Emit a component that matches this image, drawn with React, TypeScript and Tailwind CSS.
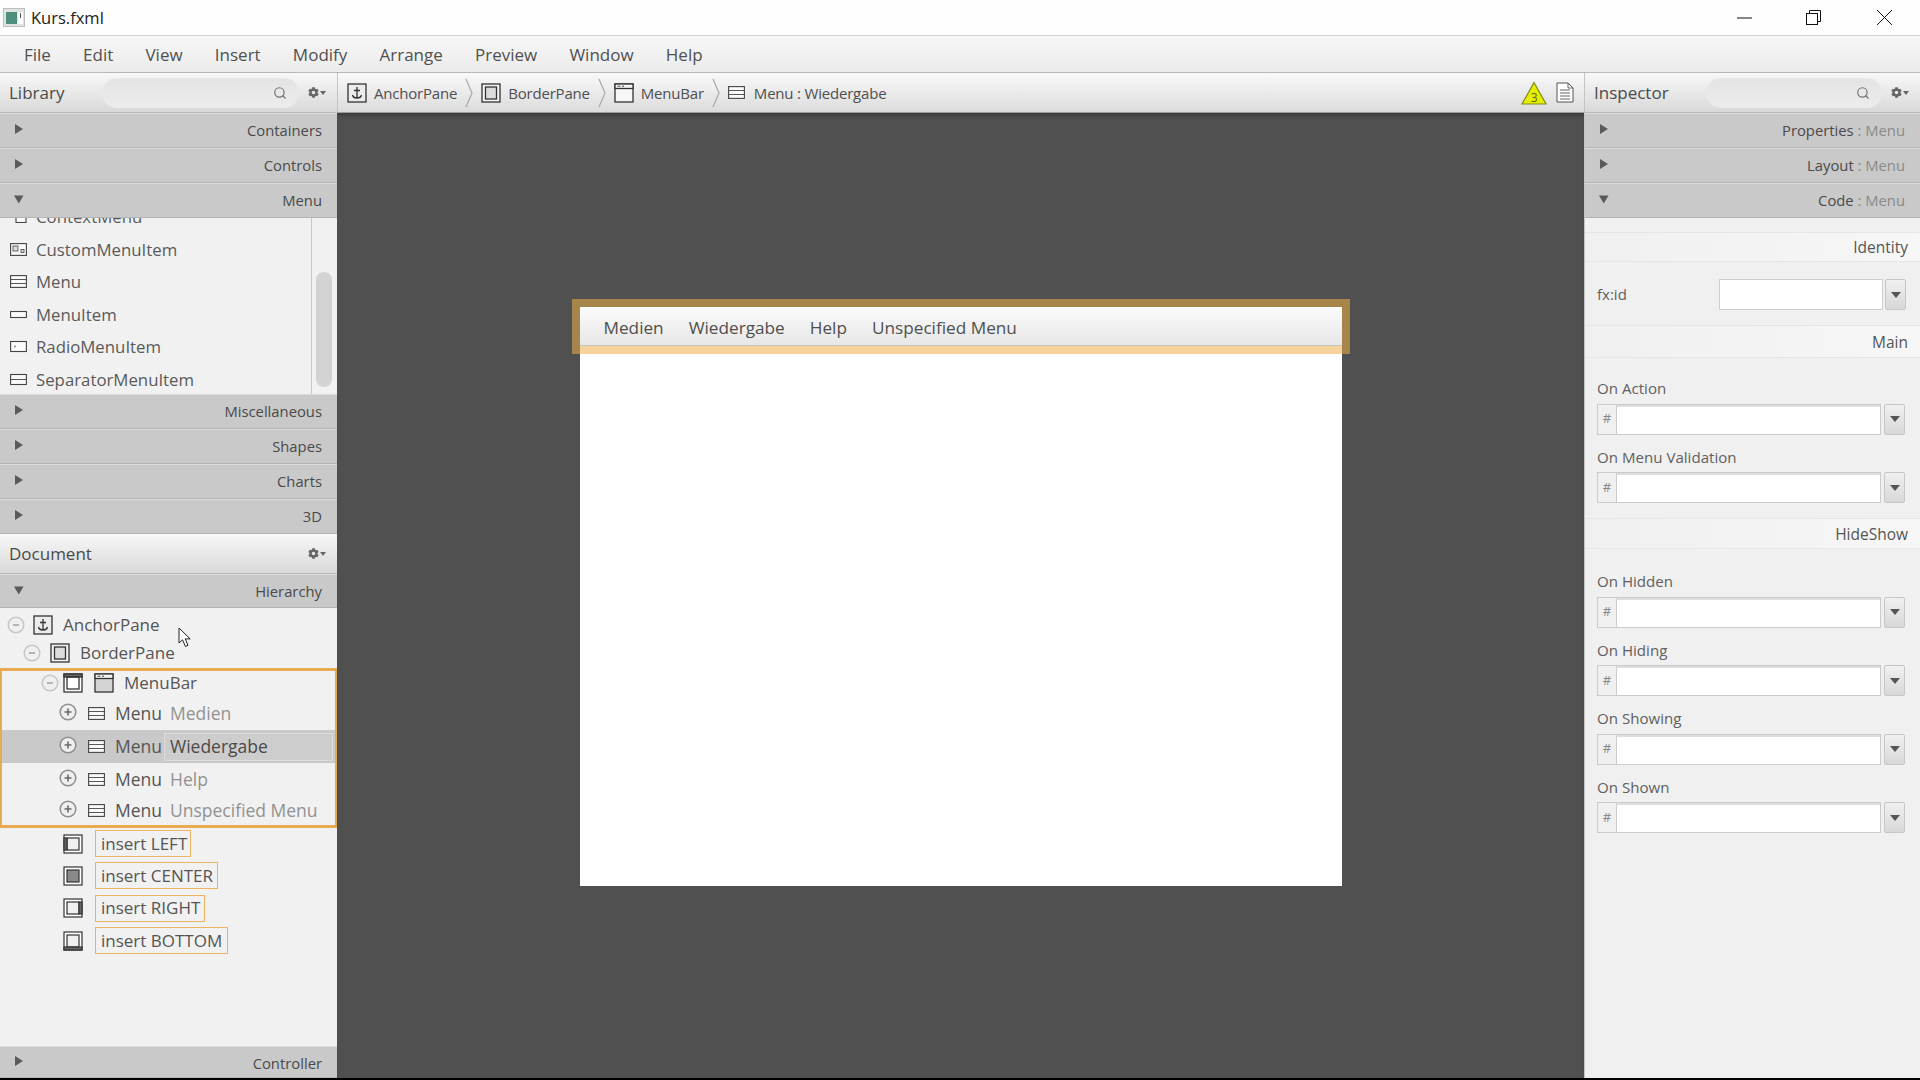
import { FaCog } from 'react-icons/fa'
import { Search } from 'lucide-react'
import type { ReactNode } from 'react'

const Arrow = ({ open }: { open?: boolean }) => (
  <svg width="10" height="10" viewBox="0 0 10 10" className="mb-[3px] shrink-0">
    <path d={open ? 'M0 1.5h9.5L4.8 9.5z' : 'M1 0l8 5-8 5z'} fill="#5a5a5a" />
  </svg>
)

const Bar = ({ open, h = 'h-[35px]', children }: { open?: boolean; h?: string; children: ReactNode }) => (
  <div
    className={`${h} shrink-0 flex items-center justify-between pl-[14px] pr-[15px] bg-[#c9c9c9] border-t border-t-[#dcdcdc] border-b border-b-[#b4b4b4] text-[14.8px] text-[#4a4a4a]`}
  >
    <Arrow open={open} />
    <span>{children}</span>
  </div>
)

const Gear = () => (
  <div className="flex items-center gap-[1px] text-[#666]">
    <FaCog size={11} />
    <svg width="6" height="4" viewBox="0 0 6 4">
      <path d="M0 0h6L3 4z" fill="#666" />
    </svg>
  </div>
)

const PanelHeader = ({ title, searchWidth }: { title: string; searchWidth?: string }) => (
  <div className="h-[40px] shrink-0 flex items-center pl-[9px] pr-[11px] bg-linear-to-b from-[#f8f8f8] to-[#d9d9d9] border-b border-b-[#b8b8b8] text-[17px] text-[#4a4a4a]">
    <span>{title}</span>
    <div className="flex-1" />
    {searchWidth && (
      <div
        className={`${searchWidth} h-[30px] mr-[9px] rounded-[14px] border border-[#e9e9e9] bg-linear-to-b from-[#e4e4e4] to-[#ececec] flex items-center justify-end pr-[11px] text-[#707070]`}
      >
        <Search size={14} strokeWidth={2} />
      </div>
    )}
    <Gear />
  </div>
)

/* little outline glyphs used in the library, tree and breadcrumb */
const AnchorIcon = () => (
  <svg width="20" height="20" viewBox="0 0 20 20" className="shrink-0" fill="none" stroke="#333" strokeWidth="1.3">
    <rect x="1" y="1" width="18" height="18" fill="#ececec" />
    <path d="M10 4v11M7 7.5h6M5.5 12c.5 2.5 2.5 3 4.5 3s4-.5 4.5-3" />
  </svg>
)

const BorderIcon = () => (
  <svg width="20" height="20" viewBox="0 0 20 20" className="shrink-0" fill="none" stroke="#333" strokeWidth="1.3">
    <rect x="1" y="1" width="18" height="18" fill="#f4f4f4" />
    <rect x="4.5" y="4" width="11" height="12" fill="#dcdcdc" />
  </svg>
)

const BarIcon = () => (
  <svg width="20" height="20" viewBox="0 0 20 20" className="shrink-0" fill="none" stroke="#333" strokeWidth="1.3">
    <rect x="1" y="1" width="18" height="18" fill="#fff" />
    <rect x="1" y="1" width="18" height="3" fill="#666" />
    <rect x="4" y="4" width="12" height="12" />
  </svg>
)

const MenuBarIcon = ({ fill = '#d4d4d4' }: { fill?: string }) => (
  <svg width="20" height="20" viewBox="0 0 20 20" className="shrink-0" fill="none" stroke="#333" strokeWidth="1.3">
    <rect x="1" y="1" width="18" height="18" fill={fill} />
    <rect x="1" y="1" width="18" height="4.5" fill="#f4f4f4" />
    <path d="M3.5 3.2h3M8 3.2h2" strokeWidth="0.9" />
  </svg>
)

const MenuIcon = () => (
  <svg width="17" height="13" viewBox="0 0 17 13" className="shrink-0" fill="none" stroke="#444" strokeWidth="1.1">
    <rect x="0.6" y="0.6" width="15.8" height="11.8" fill="#fafafa" />
    <path d="M1 4.5h15M1 8.5h15" strokeWidth="0.9" />
  </svg>
)

const ItemIcon = () => (
  <svg width="17" height="13" viewBox="0 0 17 13" className="shrink-0" fill="none" stroke="#444" strokeWidth="1.1">
    <rect x="0.6" y="3.5" width="15.8" height="6" fill="#fafafa" />
  </svg>
)

const RadioIcon = () => (
  <svg width="17" height="13" viewBox="0 0 17 13" className="shrink-0" fill="none" stroke="#444" strokeWidth="1.1">
    <rect x="0.6" y="1.5" width="15.8" height="10" fill="#fafafa" />
    <circle cx="5" cy="6.5" r="1" fill="#888" stroke="none" />
  </svg>
)

const CustomIcon = () => (
  <svg width="17" height="13" viewBox="0 0 17 13" className="shrink-0" fill="none" stroke="#444" strokeWidth="1.1">
    <rect x="0.6" y="0.6" width="15.8" height="11.8" fill="#fafafa" />
    <rect x="3" y="3" width="5" height="5" fill="#ddd" strokeWidth="0.8" />
    <rect x="11" y="6.5" width="3" height="3" fill="#ddd" strokeWidth="0.8" />
  </svg>
)

const SeparatorIcon = () => (
  <svg width="17" height="13" viewBox="0 0 17 13" className="shrink-0" fill="none" stroke="#444" strokeWidth="1.1">
    <rect x="0.6" y="1.5" width="15.8" height="10" fill="#fafafa" />
    <path d="M1 6.5h15" strokeWidth="0.9" />
  </svg>
)

const ContextIcon = () => (
  <svg width="17" height="13" viewBox="0 0 17 13" className="shrink-0" fill="none" stroke="#444" strokeWidth="1.1">
    <path d="M1 1h4v3" />
    <rect x="6" y="3" width="10" height="9.5" fill="#fafafa" />
    <path d="M6 7h10" strokeWidth="0.9" />
  </svg>
)

const PaneIcon = ({ side }: { side: 'left' | 'center' | 'right' | 'bottom' }) => (
  <svg width="20" height="20" viewBox="0 0 20 20" className="shrink-0" fill="none" stroke="#333" strokeWidth="1.2">
    <rect x="1" y="1" width="18" height="18" fill="#fff" />
    <rect x="4" y="4" width="12" height="12" fill={side === 'center' ? '#8a8a8a' : '#f0f0f0'} />
    {side === 'left' && <rect x="1" y="4" width="3" height="12" fill="#666" />}
    {side === 'right' && <rect x="16" y="4" width="3" height="12" fill="#666" />}
    {side === 'bottom' && <rect x="1" y="16" width="18" height="3" fill="#666" />}
  </svg>
)

const Toggle = ({ plus }: { plus?: boolean }) => (
  <svg width="18" height="18" viewBox="0 0 18 18" className={`shrink-0 ${plus ? 'mb-[3px]' : ''}`} fill="none">
    <circle cx="9" cy="9" r="7.8" fill="#efefef" stroke={plus ? '#8e8e8e' : '#c6c6c6'} strokeWidth="1.5" />
    <path d={plus ? 'M5.5 9h7M9 5.5v7' : 'M6 9h6'} stroke={plus ? '#6a6a6a' : '#a4a4a4'} strokeWidth="1.6" />
  </svg>
)

const Chevron = () => (
  <svg width="8" height="30" viewBox="0 0 8 30" className="shrink-0" fill="none">
    <path d="M1 1l6 14-6 14" stroke="#a8a8a8" strokeWidth="1.2" />
  </svg>
)

const libraryItems = [
  { name: 'ContextMenu', icon: <ContextIcon /> },
  { name: 'CustomMenuItem', icon: <CustomIcon /> },
  { name: 'Menu', icon: <MenuIcon /> },
  { name: 'MenuItem', icon: <ItemIcon /> },
  { name: 'RadioMenuItem', icon: <RadioIcon /> },
  { name: 'SeparatorMenuItem', icon: <SeparatorIcon /> },
]

const menuRows = [
  { label: 'Medien', h: 'h-[33px]' },
  { label: 'Wiedergabe', h: 'h-[33px]', selected: true },
  { label: 'Help', h: 'h-[32px]' },
  { label: 'Unspecified Menu', h: 'h-[30px]' },
]

const inserts: { label: string; side: 'left' | 'center' | 'right' | 'bottom'; w: string }[] = [
  { label: 'insert LEFT', side: 'left', w: 'w-[96px]' },
  { label: 'insert CENTER', side: 'center', w: 'w-[123px]' },
  { label: 'insert RIGHT', side: 'right', w: 'w-[110px]' },
  { label: 'insert BOTTOM', side: 'bottom', w: 'w-[133px]' },
]

const LeftColumn = () => (
  <div className="w-[337px] shrink-0 flex flex-col bg-[#f1f1f1] relative">
    <PanelHeader title="Library" searchWidth="w-[197px]" />
    <Bar>Containers</Bar>
    <Bar>Controls</Bar>
    <Bar open>Menu</Bar>
    <div className="h-[176px] shrink-0 flex overflow-hidden">
      <div className="flex-1 -mt-[17.5px] pl-[10px] text-[16.8px] text-[#5a5a5a]">
        {libraryItems.map((item) => (
          <div key={item.name} className="h-[32.5px] flex items-center gap-[9px]">
            {item.icon}
            <span>{item.name}</span>
          </div>
        ))}
      </div>
      <div className="w-[26px] shrink-0 border-l border-l-[#c8c8c8] pt-[54px] pl-[4px]">
        <div className="w-[16px] h-[115px] rounded-full bg-[#d3d3d3]" />
      </div>
    </div>
    <Bar>Miscellaneous</Bar>
    <Bar>Shapes</Bar>
    <Bar>Charts</Bar>
    <Bar>3D</Bar>
    <PanelHeader title="Document" />
    <Bar open h="h-[34px]">Hierarchy</Bar>
    <div className="flex-1 pt-[3px] text-[17px] text-[#555]">
      <div className="h-[28px] flex items-center pl-[7px]">
        <Toggle />
        <div className="ml-[8px]">
          <AnchorIcon />
        </div>
        <span className="ml-[10px]">AnchorPane</span>
      </div>
      <div className="h-[28px] flex items-center pl-[23px]">
        <Toggle />
        <div className="ml-[9px]">
          <BorderIcon />
        </div>
        <span className="ml-[10px]">BorderPane</span>
      </div>
      <div className="mt-[1px] border-y-[3px] border-x-2 border-[#e9ab4f]">
        <div className="h-[26px] pb-[3px] flex items-center pl-[39px]">
          <Toggle />
          <div className="ml-[4px]">
            <BarIcon />
          </div>
          <div className="ml-[11px]">
            <MenuBarIcon />
          </div>
          <span className="ml-[10px]">MenuBar</span>
        </div>
        {menuRows.map((row) => (
          <div
            key={row.label}
            className={`${row.h} flex items-center pl-[57px] text-[17.5px] ${row.selected ? 'bg-[#c9c9c9]' : ''}`}
          >
            <Toggle plus />
            <div className="ml-[11px]">
              <MenuIcon />
            </div>
            <span className="ml-[10px] w-[49px]">Menu</span>
            {row.selected ? (
              <span className="flex-1 h-[28px] mr-[2px] pl-[5px] flex items-center border border-[#dcdcdc] bg-[#cdcdcd] text-[#4a4a4a]">
                {row.label}
              </span>
            ) : (
              <span className="ml-[6px] text-[#929292]">{row.label}</span>
            )}
          </div>
        ))}
      </div>
      <div className="-mt-[0.5px]">
        {inserts.map((row) => (
          <div key={row.label} className="h-[32.3px] flex items-center pl-[63px]">
            <PaneIcon side={row.side} />
            <span
              className={`${row.w} ml-[12px] h-[27px] pl-[5px] flex items-center border border-[#ecb463] whitespace-nowrap`}
            >
              {row.label}
            </span>
          </div>
        ))}
      </div>
    </div>
    <Bar h="h-[32px]">
      <span className="block pt-[2px]">Controller</span>
    </Bar>
    <svg width="14" height="21" viewBox="0 0 14 21" className="absolute left-[178px] top-[554px]">
      <path d="M1 1v15l3.6-3.2L7.4 19.5l2.6-1.2-2.8-6.4h5z" fill="#fff" stroke="#222" strokeWidth="1" />
    </svg>
  </div>
)

const Crumb = ({ icon, children }: { icon: ReactNode; children: ReactNode }) => (
  <div className="flex items-center gap-[7px]">
    {icon}
    <span className="pt-[2px]">{children}</span>
  </div>
)

const Center = () => (
  <div className="flex-1 flex flex-col min-w-0">
    <div className="h-[40px] shrink-0 flex items-center pl-[9px] pr-[10px] bg-linear-to-b from-[#f9f9f9] to-[#dcdcdc] border-b border-b-[#9e9e9e] border-l border-l-[#c4c4c4] text-[15px] tracking-[-0.2px] text-[#4f4f4f]">
      <div className="flex items-center gap-[8px]">
        <Crumb icon={<AnchorIcon />}>AnchorPane</Crumb>
        <Chevron />
        <Crumb icon={<BorderIcon />}>BorderPane</Crumb>
        <Chevron />
        <Crumb icon={<MenuBarIcon fill="#f7f7f7" />}>MenuBar</Crumb>
        <Chevron />
        <Crumb icon={<MenuIcon />}>
          <span className="ml-[2px]">Menu : Wiedergabe</span>
        </Crumb>
      </div>
      <div className="flex-1" />
      <svg width="26" height="24" viewBox="0 0 26 24" className="shrink-0 mr-[9px]">
        <path d="M13 1.5L25 23H1z" fill="#e6ee00" stroke="#7f8a20" strokeWidth="1.2" />
        <text x="13" y="21" textAnchor="middle" fontSize="12" fill="#5d6410" fontFamily="Open Sans">
          3
        </text>
      </svg>
      <svg width="18" height="21" viewBox="0 0 18 21" className="shrink-0" fill="none" stroke="#555">
        <path d="M1 1h11l5 5v14H1z" fill="#fff" />
        <path d="M12 1v5h5M4 8h10M4 11h10M4 14h6M10 14h4M4 17h10" strokeWidth="0.9" />
      </svg>
    </div>
    <div className="flex-1 flex justify-center items-start pt-[194px] bg-[#505050] shadow-[inset_0_5px_4px_-3px_#3a3a3a]">
      <div className="w-[762px] h-[579px] bg-white relative">
        <div className="h-[39px] pt-[3px] flex items-center gap-[25px] pl-[24px] bg-linear-to-b from-[#fbfbfb] to-[#e7e7e7] border-b border-b-[#c4c4c4] text-[17.2px] text-[#4f4f4f]">
          <span>Medien</span>
          <span>Wiedergabe</span>
          <span>Help</span>
          <span>Unspecified Menu</span>
        </div>
        <div className="h-[8px] bg-[#f6d39a]" />
        <div className="absolute -left-2 -right-2 -top-2 h-[55px] border-x-8 border-t-8 border-[#a6854a] pointer-events-none" />
      </div>
    </div>
  </div>
)

const Dropdown = () => (
  <div className="w-[21px] h-[31px] shrink-0 flex items-center justify-center border border-[#c6c6c6] rounded-[2px] bg-linear-to-b from-[#f0f0f0] to-[#d8d8d8]">
    <svg width="10" height="6" viewBox="0 0 10 6">
      <path d="M0 0h10L5 6z" fill="#555" />
    </svg>
  </div>
)

const Strip = ({ h, children }: { h: string; children: ReactNode }) => (
  <div
    className={`${h} shrink-0 flex items-center justify-end pt-[2px] pr-[12px] bg-linear-to-r from-[#f0f0f0] via-[#f3f3f3] to-[#f7f7f7] border-y border-y-[#e6e6e6] text-[15.5px] text-[#555]`}
  >
    {children}
  </div>
)

const HandlerField = ({ label }: { label: string }) => (
  <div className="h-[68.5px] shrink-0 pl-[12px] pr-[15px]">
    <div className="h-[23px] flex items-center text-[15.1px] text-[#606060]">{label}</div>
    <div className="mt-[3.5px] h-[31px] flex gap-[3px]">
      <div className="flex-1 flex border border-[#cbcbcb]">
        <div className="w-[18px] shrink-0 flex items-center justify-center bg-[#f0f0f0] text-[13px] text-[#888]">#</div>
        <div className="flex-1 bg-white border-t-2 border-t-[#dedede] border-l border-l-[#cbcbcb]" />
      </div>
      <Dropdown />
    </div>
  </div>
)

const Inspector = () => (
  <div className="w-[336px] shrink-0 flex flex-col bg-[#f0f0f0] border-l border-l-[#c4c4c4]">
    <PanelHeader title="Inspector" searchWidth="w-[176px]" />
    {[
      { name: 'Properties', open: false },
      { name: 'Layout', open: false },
      { name: 'Code', open: true },
    ].map((bar) => (
      <Bar key={bar.name} open={bar.open}>
        {bar.name} <span className="text-[#8a8a8a]">: Menu</span>
      </Bar>
    ))}
    <div className="h-[14px] shrink-0" />
    <Strip h="h-[30px]">Identity</Strip>
    <div className="h-[63px] shrink-0 pt-[2px] flex items-center pl-[12px] pr-[14px] text-[15px] text-[#606060]">
      <span>fx:id</span>
      <div className="flex-1" />
      <div className="w-[164px] h-[31px] bg-white border border-[#cfcfcf] mr-[2px]" />
      <Dropdown />
    </div>
    <Strip h="h-[33px]">Main</Strip>
    <div className="h-[19px] shrink-0" />
    <HandlerField label="On Action" />
    <HandlerField label="On Menu Validation" />
    <div className="h-[4px] shrink-0" />
    <Strip h="h-[31px]">HideShow</Strip>
    <div className="h-[21px] shrink-0" />
    <HandlerField label="On Hidden" />
    <HandlerField label="On Hiding" />
    <HandlerField label="On Showing" />
    <HandlerField label="On Shown" />
  </div>
)

export default function App() {
  return (
    <div className="w-[1920px] h-[1080px] flex flex-col overflow-hidden bg-black font-['Open_Sans',sans-serif]">
      <div className="h-[36px] shrink-0 flex items-center pl-[3px] bg-[#fefefe] border-b border-b-[#d2d2d2] text-[16.5px] text-[#222]">
        <svg width="22" height="19" viewBox="0 0 22 19" className="shrink-0">
          <rect x="0.5" y="0.5" width="21" height="18" fill="#dfe3e2" stroke="#bdbdbd" />
          <rect x="3" y="4" width="11" height="12" fill="#4f8f7d" />
          <rect x="15" y="4" width="5" height="12" fill="#fff" />
          <rect x="17" y="5" width="1" height="5" fill="#555" />
        </svg>
        <span className="ml-[6px] pt-[1px]">Kurs.fxml</span>
        <div className="flex-1" />
        <svg width="15" height="2" viewBox="0 0 15 2" className="shrink-0">
          <path d="M0 1h15" stroke="#111" strokeWidth="1" />
        </svg>
        <svg width="15" height="15" viewBox="0 0 15 15" className="shrink-0 ml-[54px]" fill="none" stroke="#111">
          <rect x="0.5" y="3.5" width="11" height="11" fill="#fefefe" />
          <path d="M3.5 3V.5h11v11H12" />
        </svg>
        <svg width="15" height="15" viewBox="0 0 15 15" className="shrink-0 ml-[56px] mr-[28px]" fill="none" stroke="#111">
          <path d="M0 0l15 15M15 0L0 15" />
        </svg>
      </div>
      <div className="h-[37px] shrink-0 pt-[1px] flex items-center gap-[32.2px] pl-[24px] bg-linear-to-b from-[#f6f6f6] to-[#ececec] border-b border-b-[#b8b8b8] text-[17px] text-[#505050]">
        {['File', 'Edit', 'View', 'Insert', 'Modify', 'Arrange', 'Preview', 'Window', 'Help'].map((m) => (
          <span key={m}>{m}</span>
        ))}
      </div>
      <div className="h-[1005px] shrink-0 flex">
        <LeftColumn />
        <Center />
        <Inspector />
      </div>
    </div>
  )
}
